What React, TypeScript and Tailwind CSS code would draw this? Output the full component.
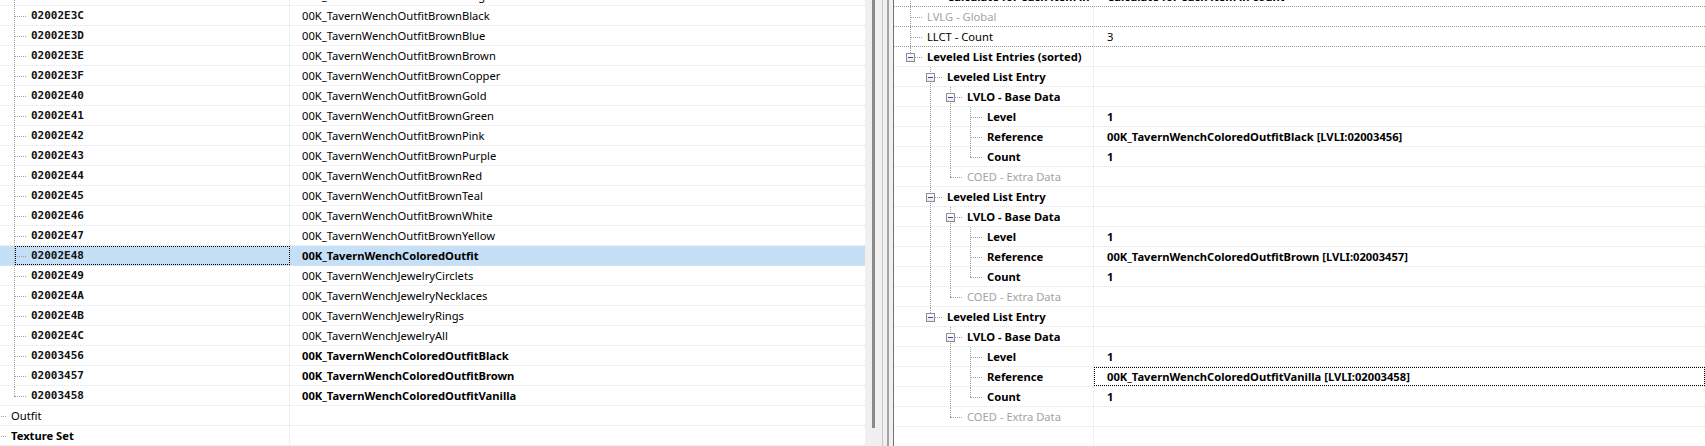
const LINE = 'border-[#a0a0a0]';

type Node = {
  depth: number;
  guides: boolean[];
  last?: boolean;
  box?: boolean;
};

function ExpandBox() {
  return (
    <div className="absolute left-[6px] top-[6px] flex h-[9px] w-[9px] items-center justify-center border border-[#8e8e8e] bg-gradient-to-b from-white to-[#e8e8e8]">
      <div className="h-px w-[5px] bg-[#2c51a8]" />
    </div>
  );
}

function Gutter({ guides, last, box }: Node) {
  return (
    <div className="flex h-full shrink-0">
      {guides.map((g, i) => (
        <div key={i} className="relative h-full w-[20px]">
          {g && <div className={`absolute left-[10px] top-0 h-full border-l border-dotted ${LINE}`} />}
        </div>
      ))}
      <div className="relative h-full w-[27px]">
        <div className={`absolute left-[10px] top-0 border-l border-dotted ${LINE} ${last ? 'h-[10px]' : 'h-full'}`} />
        <div className={`absolute left-[10px] top-[10px] w-[12px] border-t border-dotted ${LINE}`} />
        {box && <ExpandBox />}
      </div>
    </div>
  );
}

const leftRows: { id: string; name: string; bold?: boolean; selected?: boolean; last?: boolean }[] = [
  { id: '02002E3B', name: '00K_TavernWenchOutfitBrownBeige' },
  { id: '02002E3C', name: '00K_TavernWenchOutfitBrownBlack' },
  { id: '02002E3D', name: '00K_TavernWenchOutfitBrownBlue' },
  { id: '02002E3E', name: '00K_TavernWenchOutfitBrownBrown' },
  { id: '02002E3F', name: '00K_TavernWenchOutfitBrownCopper' },
  { id: '02002E40', name: '00K_TavernWenchOutfitBrownGold' },
  { id: '02002E41', name: '00K_TavernWenchOutfitBrownGreen' },
  { id: '02002E42', name: '00K_TavernWenchOutfitBrownPink' },
  { id: '02002E43', name: '00K_TavernWenchOutfitBrownPurple' },
  { id: '02002E44', name: '00K_TavernWenchOutfitBrownRed' },
  { id: '02002E45', name: '00K_TavernWenchOutfitBrownTeal' },
  { id: '02002E46', name: '00K_TavernWenchOutfitBrownWhite' },
  { id: '02002E47', name: '00K_TavernWenchOutfitBrownYellow' },
  { id: '02002E48', name: '00K_TavernWenchColoredOutfit', bold: true, selected: true },
  { id: '02002E49', name: '00K_TavernWenchJewelryCirclets' },
  { id: '02002E4A', name: '00K_TavernWenchJewelryNecklaces' },
  { id: '02002E4B', name: '00K_TavernWenchJewelryRings' },
  { id: '02002E4C', name: '00K_TavernWenchJewelryAll' },
  { id: '02003456', name: '00K_TavernWenchColoredOutfitBlack', bold: true },
  { id: '02003457', name: '00K_TavernWenchColoredOutfitBrown', bold: true },
  { id: '02003458', name: '00K_TavernWenchColoredOutfitVanilla', bold: true, last: true },
];

type RightRow = Node & {
  label: string;
  value?: string;
  tone?: 'bold' | 'normal' | 'gray';
  dark?: boolean;
  focus?: boolean;
};

const entry = (ref: string, final: boolean, focus = false): RightRow[] => {
  const g = !final;
  return [
    { depth: 1, guides: [false], last: final, box: true, label: 'Leveled List Entry', tone: 'bold' },
    { depth: 2, guides: [false, g], box: true, label: 'LVLO - Base Data', tone: 'bold' },
    { depth: 3, guides: [false, g, true], label: 'Level', value: '1', tone: 'bold' },
    { depth: 3, guides: [false, g, true], label: 'Reference', value: ref, tone: 'bold', focus },
    { depth: 3, guides: [false, g, true], last: true, label: 'Count', value: '1', tone: 'bold' },
    { depth: 2, guides: [false, g], last: true, label: 'COED - Extra Data', tone: 'gray' },
  ];
};

const rightRows: RightRow[] = [
  { depth: 1, guides: [true], last: true, label: 'Calculate for each item in count', value: 'Calculate for each item in count', tone: 'bold', dark: true },
  { depth: 0, guides: [], label: 'LVLG - Global', tone: 'gray', dark: true },
  { depth: 0, guides: [], label: 'LLCT - Count', value: '3', tone: 'normal', dark: true },
  { depth: 0, guides: [], last: true, box: true, label: 'Leveled List Entries (sorted)', tone: 'bold' },
  ...entry('00K_TavernWenchColoredOutfitBlack [LVLI:02003456]', false),
  ...entry('00K_TavernWenchColoredOutfitBrown [LVLI:02003457]', false),
  ...entry('00K_TavernWenchColoredOutfitVanilla [LVLI:02003458]', true, true),
];

const toneClass = (tone?: string) =>
  tone === 'bold' ? 'font-bold text-black' : tone === 'gray' ? 'text-[#a3a3a3]' : 'text-black';

function LeftPanel() {
  return (
    <div className="flex h-full w-[865px] shrink-0 flex-col overflow-hidden bg-white">
      <div className="-mt-[14px] flex flex-col">
        {leftRows.map((r) => (
          <div
            key={r.id}
            className={`relative flex h-[20px] shrink-0 border-b border-dotted border-[#e3e3e3] ${r.selected ? 'bg-[#c4dff6]' : ''}`}
          >
            <div className="flex h-full w-[290px] shrink-0 items-center overflow-hidden border-r border-dotted border-[#e3e3e3]">
              <div className="-ml-[16px] h-full">
                <Gutter depth={1} guides={[false]} last={r.last} />
              </div>
              <span className="[font-family:'DejaVu_Sans_Mono',monospace] text-[11px] font-bold text-[#111]">{r.id}</span>
            </div>
            <div className={`flex items-center pl-[12px] whitespace-nowrap text-black ${r.bold ? 'font-bold' : ''}`}>
              {r.name}
            </div>
            {r.selected && (
              <div className="absolute bottom-0 left-[15px] top-0 w-[275px] border border-dotted border-black" />
            )}
          </div>
        ))}
        {[
          { label: 'Outfit', bold: false },
          { label: 'Texture Set', bold: true },
        ].map((r) => (
          <div key={r.label} className="flex h-[20px] shrink-0 border-b border-dotted border-[#e3e3e3]">
            <div className="flex h-full w-[290px] shrink-0 items-center overflow-hidden border-r border-dotted border-[#e3e3e3]">
              <div className="-ml-[16px] h-full">
                <Gutter depth={0} guides={[]} />
              </div>
              <span className={`text-black ${r.bold ? 'font-bold' : ''}`}>{r.label}</span>
            </div>
          </div>
        ))}
      </div>
    </div>
  );
}

function Splitter() {
  return (
    <div className="flex h-full w-[29px] shrink-0 bg-[#f0f0f0]">
      <div className="flex h-full w-[17px] shrink-0 justify-start pl-[7px]">
        <div className="h-[428px] w-[3px] bg-[#8a8a8a]" />
      </div>
      <div className="h-full w-px bg-[#c8c8c8]" />
      <div className="w-[4px]" />
      <div className="h-full w-[2px] bg-[#a3a3a3]" />
      <div className="w-[4px]" />
      <div className="h-full w-px bg-[#737373]" />
    </div>
  );
}

function RightPanel() {
  return (
    <div className="flex h-full flex-1 flex-col overflow-hidden bg-white">
      <div className="-mt-[13px] flex flex-col">
        {rightRows.map((r, i) => (
          <div
            key={i}
            className={`flex h-[20px] shrink-0 border-b border-dotted ${r.dark ? 'border-[#9a9a9a]' : 'border-[#e3e3e3]'}`}
          >
            <div className="flex h-full w-[200px] shrink-0 items-center overflow-hidden border-r border-dotted border-[#e3e3e3]">
              <div className="ml-[6px] h-full">
                <Gutter depth={r.depth} guides={r.guides} last={r.last} box={r.box} />
              </div>
              <span className={`whitespace-nowrap ${toneClass(r.tone)}`}>{r.label}</span>
            </div>
            <div
              className={`flex flex-1 items-center pl-[13px] whitespace-nowrap ${toneClass(r.tone)} ${r.focus ? 'outline-1 -outline-offset-1 outline-dotted outline-black' : ''}`}
            >
              {r.value}
            </div>
          </div>
        ))}
      </div>
      <div className="flex flex-1">
        <div className="h-full w-[200px] border-r border-dotted border-[#e3e3e3]" />
      </div>
    </div>
  );
}

export default function App() {
  return (
    <div className="flex h-[446px] w-[1705px] overflow-hidden bg-white [font-family:'Noto_Sans',sans-serif] text-[11.2px] leading-[20px]">
      <LeftPanel />
      <Splitter />
      <RightPanel />
    </div>
  );
}
